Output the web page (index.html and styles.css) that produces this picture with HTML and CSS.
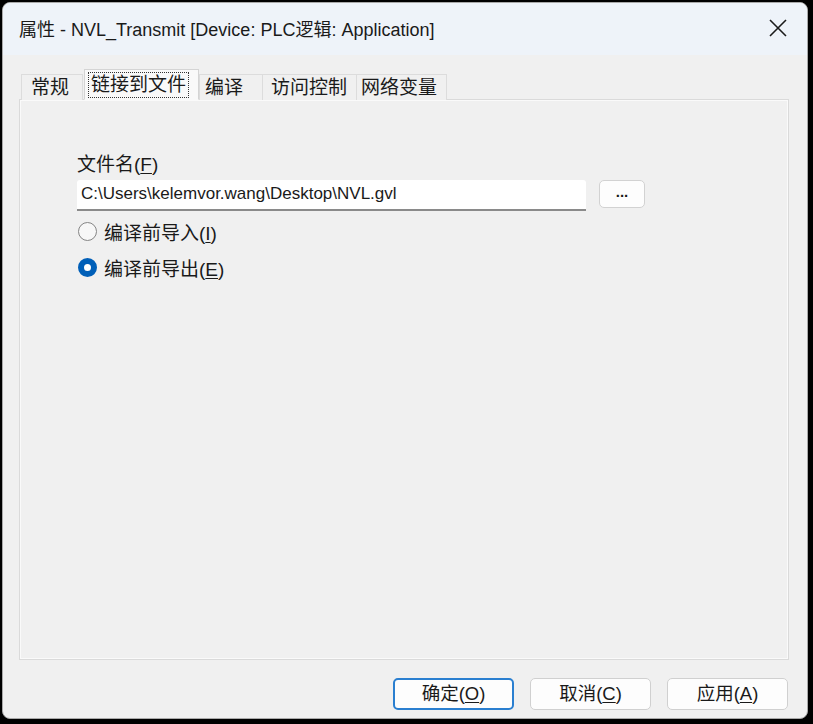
FILE: index.html
```html
<!DOCTYPE html>
<html lang="zh-CN">
<head>
<meta charset="utf-8">
<title>属性</title>
<link rel="stylesheet" href="styles.css">
</head>
<body>
<div class="window">
  <div class="titlebar">
    <span class="title">属性 - NVL_Transmit [Device: PLC逻辑: Application]</span>
    <svg class="close" width="18" height="18" viewBox="0 0 18 18"><path d="M1 1 L17 17 M17 1 L1 17" stroke="#1b1b1b" stroke-width="1.6" fill="none"/></svg>
  </div>
  <div class="body">
    <div class="tabs">
      <div class="tab t1">常规</div>
      <div class="tab sel"><span class="focus">链接到文件</span></div>
      <div class="tab t3">编译</div>
      <div class="tab t4">访问控制</div>
      <div class="tab t5">网络变量</div>
    </div>
    <div class="panel">
      <div class="label">文件名(<u>F</u>)</div>
      <div class="filerow">
        <div class="input">C:\Users\kelemvor.wang\Desktop\NVL.gvl</div>
        <div class="browse">...</div>
      </div>
      <div class="radio r1"><span class="circle"></span><span>编译前导入(<u>I</u>)</span></div>
      <div class="radio r2"><span class="circle on"></span><span>编译前导出(<u>E</u>)</span></div>
    </div>
    <div class="buttons">
      <div class="btn default">确定(<u>O</u>)</div>
      <div class="btn">取消(<u>C</u>)</div>
      <div class="btn">应用(<u>A</u>)</div>
    </div>
  </div>
</div>
</body>
</html>
```
FILE: styles.css
```css
html, body {
  margin: 0;
  padding: 0;
}
body {
  background: #000;
  width: 813px;
  height: 724px;
  overflow: hidden;
  font-family: "Liberation Sans", "Noto Sans CJK SC", sans-serif;
  color: #1a1a1a;
}
.window {
  margin: 2px 0 0 2px;
  width: 806px;
  height: 717px;
  box-sizing: border-box;
  border: 1px solid #a9a9a9;
  border-radius: 8px;
  background: #f0f0f0;
  overflow: hidden;
  display: flex;
  flex-direction: column;
}
.titlebar {
  height: 50px;
  background: #eef3f9;
  display: flex;
  align-items: center;
  justify-content: space-between;
  padding: 0 20px 2px 16px;
  flex-shrink: 0;
}
.title {
  font-size: 18px;
}
.close {
  display: block;
}
.body {
  flex: 1;
  display: flex;
  flex-direction: column;
  padding: 14px 16px 0 16px;
}
.tabs {
  display: flex;
  align-items: flex-end;
  height: 31px;
  position: relative;
  z-index: 1;
  margin-bottom: -1px;
}
.tab {
  font-size: 19px;
  height: 26px;
  line-height: 26px;
  box-sizing: border-box;
  border: 1px solid #dcdcdc;
  border-bottom: none;
  background: #f0f0f0;
  padding: 0 8px;
  margin-right: -1px;
  white-space: nowrap;
}
.t1 { margin-left: 2px; width: 62px; padding-left: 9px; }
.t3 { width: 64px; padding-left: 5px; }
.t4 { width: 95px; padding-left: 8px; }
.t5 { width: 91px; padding-left: 4px; }
.tab.sel {
  height: 31px;
  line-height: 29px;
  background: #f9f9f9;
  border-color: #d4d4d4;
  padding: 0 3px;
  margin: 0 0 0 2px;
  width: 115px;
  border-bottom: 1px solid #f9f9f9;
}
.focus {
  display: inline-block;
  line-height: 24px;
  padding: 0 2px;
  border: 1px dotted #333;
}
.panel {
  width: 770px;
  height: 561px;
  box-sizing: border-box;
  border: 1px solid #dadada;
  box-shadow: inset 1px 1px 0 #fafafa, inset -1px -1px 0 #fafafa;
  padding: 52px 0 0 57px;
  font-size: 19px;
}
.label {
  height: 26px;
  line-height: 26px;
}
.filerow {
  display: flex;
  align-items: flex-start;
  gap: 13px;
  margin-top: 2px;
}
.input {
  width: 509px;
  height: 31px;
  box-sizing: border-box;
  background: #fff;
  border-bottom: 2px solid #8a8a8a;
  border-radius: 3px 3px 0 0;
  padding: 0 4px;
  line-height: 28px;
  font-size: 17px;
}
.browse {
  width: 46px;
  height: 28px;
  box-sizing: border-box;
  background: #fdfdfd;
  border: 1px solid #d2d2d2;
  border-radius: 5px;
  text-align: center;
  line-height: 22px;
  font-size: 15px;
  font-weight: bold;
}
.radio {
  display: flex;
  align-items: center;
  gap: 7px;
  height: 36px;
  margin-left: 1px;
}
.r1 { margin-top: 2px; }
.circle {
  width: 19px;
  height: 19px;
  box-sizing: border-box;
  border-radius: 50%;
  border: 1.5px solid #858585;
  background: #f7f7f7;
}
.circle.on {
  border: 6px solid #005fb8;
  background: #fff;
}
.buttons {
  display: flex;
  justify-content: flex-end;
  gap: 16px;
  padding: 18px 3px 0 0;
}
.btn {
  width: 121px;
  height: 32px;
  box-sizing: border-box;
  border: 1px solid #d0d0d0;
  border-radius: 5px;
  background: #fdfdfd;
  text-align: center;
  line-height: 30px;
  font-size: 18.5px;
}
.btn.default {
  border: 2px solid #2a7fd0;
  line-height: 28px;
}
u {
  text-underline-offset: 2px;
}
```
